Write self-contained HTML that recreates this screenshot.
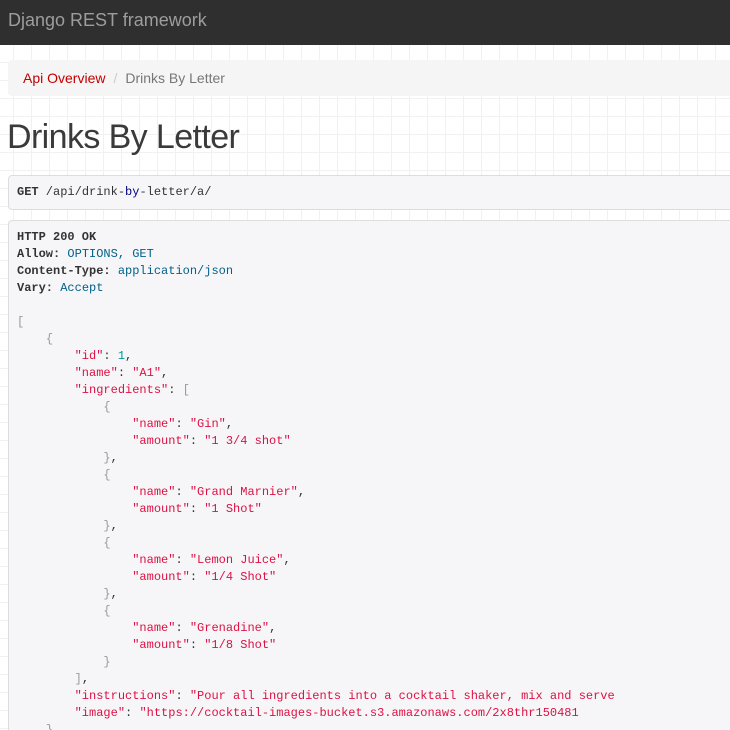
<!DOCTYPE html>
<html><head><style>
html,body{margin:0;width:730px;height:730px;overflow:hidden}
body{font-family:"Liberation Sans",Arial,sans-serif;position:relative;
background-color:#fff;
background-image:linear-gradient(#f1f1f1 1px,transparent 1px),linear-gradient(90deg,#f1f1f1 1px,transparent 1px);
background-size:18px 18px;background-position:13px 8px;}
.wrap{position:absolute;left:0;top:0;width:730px;height:730px;overflow:hidden}
.nav{height:45px;background:#2f2f2f;color:#9d9d9d;font-size:18px;line-height:40px;padding-left:8px;}
.bc{position:absolute;left:8px;top:60px;width:722px;height:36px;background:#f5f5f5;border-radius:4px 0 0 4px;font-size:14px;line-height:36px;padding-left:15px;box-sizing:border-box;color:#777}
.bc a{color:#c20000;text-decoration:none}
.bc .sep{color:#ccc;padding:0 8px}
h1{position:absolute;left:7px;top:115px;margin:0;font-size:34px;font-weight:normal;color:#3a3a3a;line-height:44px;letter-spacing:-0.6px}
pre{position:absolute;left:8px;margin:0;width:740px;box-sizing:border-box;background:#f6f6f8;border:1px solid #ddd;border-radius:4px;
font-family:"Liberation Mono",monospace;font-size:12px;line-height:17px;color:#333;padding:8px 8px;}
.g{top:175px;height:35px}
.r{top:220px;height:540px}
b{font-weight:bold}
.k{color:#dd1144}.s{color:#dd1144}.n{color:#009999}.p{color:#999}.h{color:#00618a}.bl{color:#000080}
</style></head><body><div class="wrap">
<div class="nav">Django REST framework</div>
<div class="bc"><a>Api Overview</a><span class="sep">/</span>Drinks By Letter</div>
<h1>Drinks By Letter</h1>
<pre class="g"><b>GET</b> /api/drink-<span class="bl">by</span>-letter/a/</pre>
<pre class="r"><b>HTTP 200 OK</b>
<b>Allow:</b> <span class="h">OPTIONS, GET</span>
<b>Content-Type:</b> <span class="h">application/json</span>
<b>Vary:</b> <span class="h">Accept</span>

<span class="p">[</span>
    <span class="p">{</span>
        <span class="k">"id"</span>: <span class="n">1</span>,
        <span class="k">"name"</span>: <span class="s">"A1"</span>,
        <span class="k">"ingredients"</span>: <span class="p">[</span>
            <span class="p">{</span>
                <span class="k">"name"</span>: <span class="s">"Gin"</span>,
                <span class="k">"amount"</span>: <span class="s">"1 3/4 shot"</span>
            <span class="p">}</span>,
            <span class="p">{</span>
                <span class="k">"name"</span>: <span class="s">"Grand Marnier"</span>,
                <span class="k">"amount"</span>: <span class="s">"1 Shot"</span>
            <span class="p">}</span>,
            <span class="p">{</span>
                <span class="k">"name"</span>: <span class="s">"Lemon Juice"</span>,
                <span class="k">"amount"</span>: <span class="s">"1/4 Shot"</span>
            <span class="p">}</span>,
            <span class="p">{</span>
                <span class="k">"name"</span>: <span class="s">"Grenadine"</span>,
                <span class="k">"amount"</span>: <span class="s">"1/8 Shot"</span>
            <span class="p">}</span>
        <span class="p">]</span>,
        <span class="k">"instructions"</span>: <span class="s">"Pour all ingredients into a cocktail shaker, mix and serve</span>
        <span class="k">"image"</span>: <span class="s">"https://cocktail-images-bucket.s3.amazonaws.com/2x8thr150481</span>
    <span class="p">}</span>,
</pre>
</div></body></html>
